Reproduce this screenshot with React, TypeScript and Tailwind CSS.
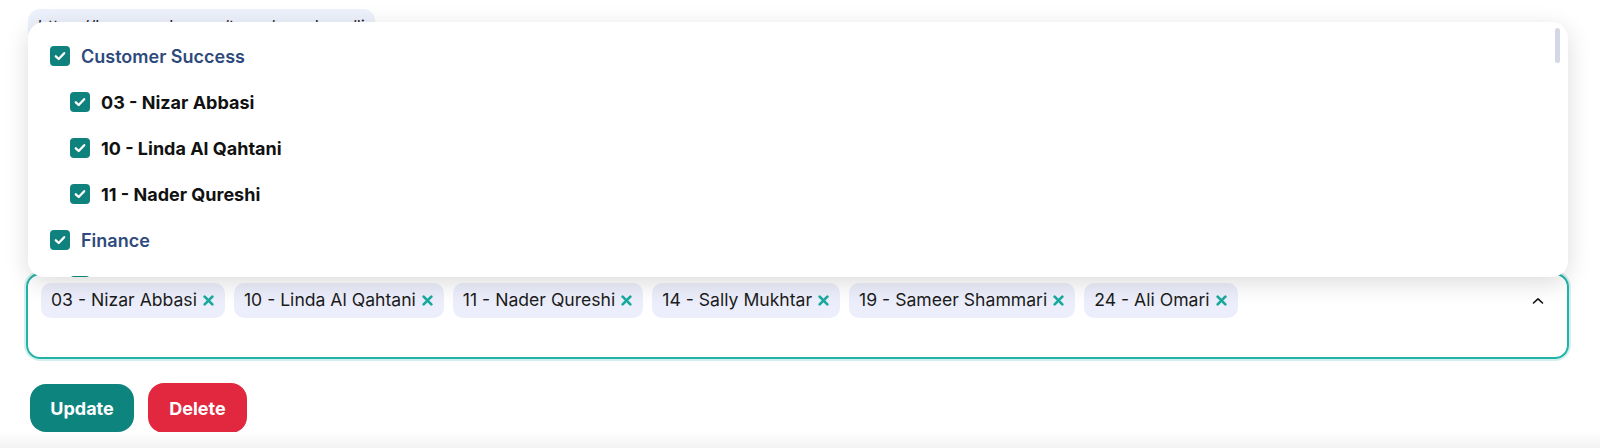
import React from "react";

const tags = [
  "03 - Nizar Abbasi",
  "10 - Linda Al Qahtani",
  "11 - Nader Qureshi",
  "14 - Sally Mukhtar",
  "19 - Sameer Shammari",
  "24 - Ali Omari",
];

const rows = [
  { label: "Customer Success", group: true },
  { label: "03 - Nizar Abbasi", group: false },
  { label: "10 - Linda Al Qahtani", group: false },
  { label: "11 - Nader Qureshi", group: false },
  { label: "Finance", group: true },
  { label: "05 - Omar Haddad", group: false },
];

function Check() {
  return (
    <span className="flex size-5 shrink-0 items-center justify-center rounded-[4px] bg-[#0f827d]">
      <svg width="14" height="14" viewBox="0 0 14 14" fill="none">
        <path d="M2.8 7.3 5.7 10 11.2 4.2" stroke="white" strokeWidth="2.3" strokeLinecap="round" strokeLinejoin="round" />
      </svg>
    </span>
  );
}

function Cross() {
  return (
    <svg width="11" height="11" viewBox="0 0 10 10" className="shrink-0">
      <path d="M1.5 1.5 8.5 8.5M8.5 1.5 1.5 8.5" stroke="#18aa9d" strokeWidth="2.4" strokeLinecap="round" />
    </svg>
  );
}

export default function App() {
  return (
    <div className="relative h-[448px] overflow-hidden bg-white font-['Inter',sans-serif]">
      <div className="pt-[9px] pl-[28px]">
        <div className="h-[34px] w-[347px] overflow-hidden whitespace-nowrap rounded-[12px] bg-[#edf1fb] px-[10px] pt-[10px] text-[17px] leading-none text-[#1f1f1f]">
          https://hr.example.com/team/members/list
        </div>
      </div>

      <div className="mt-[230px] pl-[26px] pr-[31px]">
        <div className="flex h-[86px] items-start rounded-[14px] border-2 border-[#22b3a7] pl-[13px] pr-[22px] pt-[8px] shadow-[0_0_0_2px_rgba(38,181,169,0.2)]">
          <div className="flex flex-1 flex-wrap gap-[9px]">
            {tags.map((t) => (
              <span
                key={t}
                className="flex h-[35px] items-center gap-[6px] rounded-[10px] bg-[#eceffb] pl-[10px] pr-[11px] text-[17.6px] text-[#1c1c1c]"
              >
                {t}
                <Cross />
              </span>
            ))}
          </div>
          <svg width="14" height="10" viewBox="0 0 14 10" className="mt-[13px]">
            <path d="M2.5 7 7 2.8 11.5 7" stroke="#111" strokeWidth="1.6" fill="none" strokeLinecap="round" strokeLinejoin="round" />
          </svg>
        </div>

        <div className="mt-[24px] flex items-center gap-[14px] pl-[4px]">
          <button className="h-[48px] w-[104px] rounded-[16px] bg-[#0e847f] text-[18px] font-bold text-white">
            Update
          </button>
          <button className="h-[50px] w-[99px] rounded-[16px] bg-[#e1283e] text-[18px] font-bold text-white">
            Delete
          </button>
        </div>
      </div>

      <div className="absolute inset-x-0 bottom-0 h-[16px] bg-gradient-to-b from-white to-[#f3f3f4]" />

      <div className="absolute left-[28px] top-[22px] h-[255px] w-[1540px] overflow-hidden rounded-[16px] bg-white shadow-[0_6px_24px_rgba(0,0,0,0.14)]">
        <div className="flex flex-col pt-[11px]">
          {rows.map((r) => (
            <div
              key={r.label}
              className={
                r.group
                  ? "flex h-[46px] shrink-0 items-center gap-[11px] pl-[22px]"
                  : "flex h-[46px] shrink-0 items-center gap-[11px] pl-[42px]"
              }
            >
              <Check />
              <span
                className={
                  r.group
                    ? "text-[18px] font-semibold text-[#2e4a7c]"
                    : "text-[18px] font-bold text-[#111]"
                }
              >
                {r.label}
              </span>
            </div>
          ))}
        </div>
        <div className="absolute right-[8px] top-[6px] h-[35px] w-[5px] rounded-full bg-[#d3d8e4]" />
      </div>
    </div>
  );
}
